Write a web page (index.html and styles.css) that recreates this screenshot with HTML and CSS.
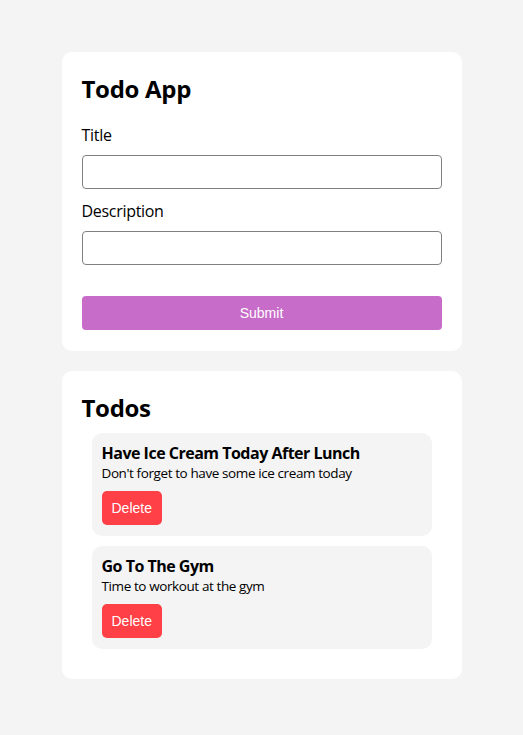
FILE: index.html
```html
<!DOCTYPE html>
<html lang="en">
<head>
<meta charset="utf-8">
<title>Todo App</title>
<link rel="stylesheet" href="styles.css">
</head>
<body>
<main class="container">
  <section class="card card-form">
    <h1 class="heading">Todo App</h1>
    <form class="form">
      <label class="label" for="title">Title</label>
      <input class="input" id="title" type="text">
      <label class="label" for="desc">Description</label>
      <input class="input" id="desc" type="text">
      <button class="btn-submit" type="button">Submit</button>
    </form>
  </section>
  <section class="card card-list">
    <h2 class="heading">Todos</h2>
    <div class="todo">
      <div class="todo-title">Have Ice Cream Today After Lunch</div>
      <div class="todo-desc">Don't forget to have some ice cream today</div>
      <button class="btn-delete" type="button">Delete</button>
    </div>
    <div class="todo">
      <div class="todo-title">Go To The Gym</div>
      <div class="todo-desc">Time to workout at the gym</div>
      <button class="btn-delete" type="button">Delete</button>
    </div>
  </section>
</main>
</body>
</html>
```
FILE: styles.css
```css
* { box-sizing: border-box; }

body {
  margin: 0;
  background: #f4f4f4;
  font-family: "Open Sans", "Noto Sans", sans-serif;
  color: #000;
}

.container {
  width: 400px;
  margin: 52px auto 0;
  display: flex;
  flex-direction: column;
  gap: 20px;
}

.card {
  background: #fff;
  border-radius: 10px;
  padding: 20px;
}

.card-form { padding-bottom: 21px; }

.heading {
  margin: 0;
  font-size: 24px;
  padding-top: 2px;
  line-height: 30px;
  font-weight: 700;
  letter-spacing: -0.3px;
}

.card-form .heading { margin-bottom: 20px; }

.form {
  display: flex;
  flex-direction: column;
}

.label {
  display: block;
  font-size: 16px;
  padding-top: 2px;
  line-height: 19px;
  margin-bottom: 10px;
  letter-spacing: -0.3px;
}

.input {
  height: 34px;
  width: 100%;
  border: 1px solid #808080;
  border-radius: 4px;
  margin: 0 0 11px;
  padding: 0 8px;
  font-size: 16px;
  background: #fff;
}

.input + .btn-submit { margin-top: 20px; }

.btn-submit {
  height: 34px;
  width: 100%;
  border: none;
  border-radius: 4px;
  background: #c86cc9;
  color: #fff;
  font-family: "Liberation Sans", Arial, sans-serif;
  font-size: 14px;
  padding: 0;
}

.todo {
  background: #f4f4f4;
  border-radius: 10px;
  margin: 10px;
  padding: 10px 10px 11px;
}

.todo-title {
  font-size: 16px;
  padding-top: 1px;
  line-height: 18px;
  font-weight: 700;
  letter-spacing: -0.5px;
}

.todo-desc {
  font-size: 13.5px;
  padding-top: 2px;
  line-height: 18px;
  letter-spacing: -0.4px;
}

.btn-delete {
  display: block;
  margin-top: 9px;
  height: 34px;
  padding: 0 10px;
  border: none;
  border-radius: 5px;
  background: #ff4046;
  color: #fff;
  font-family: "Liberation Sans", Arial, sans-serif;
  font-size: 14px;
}
```
